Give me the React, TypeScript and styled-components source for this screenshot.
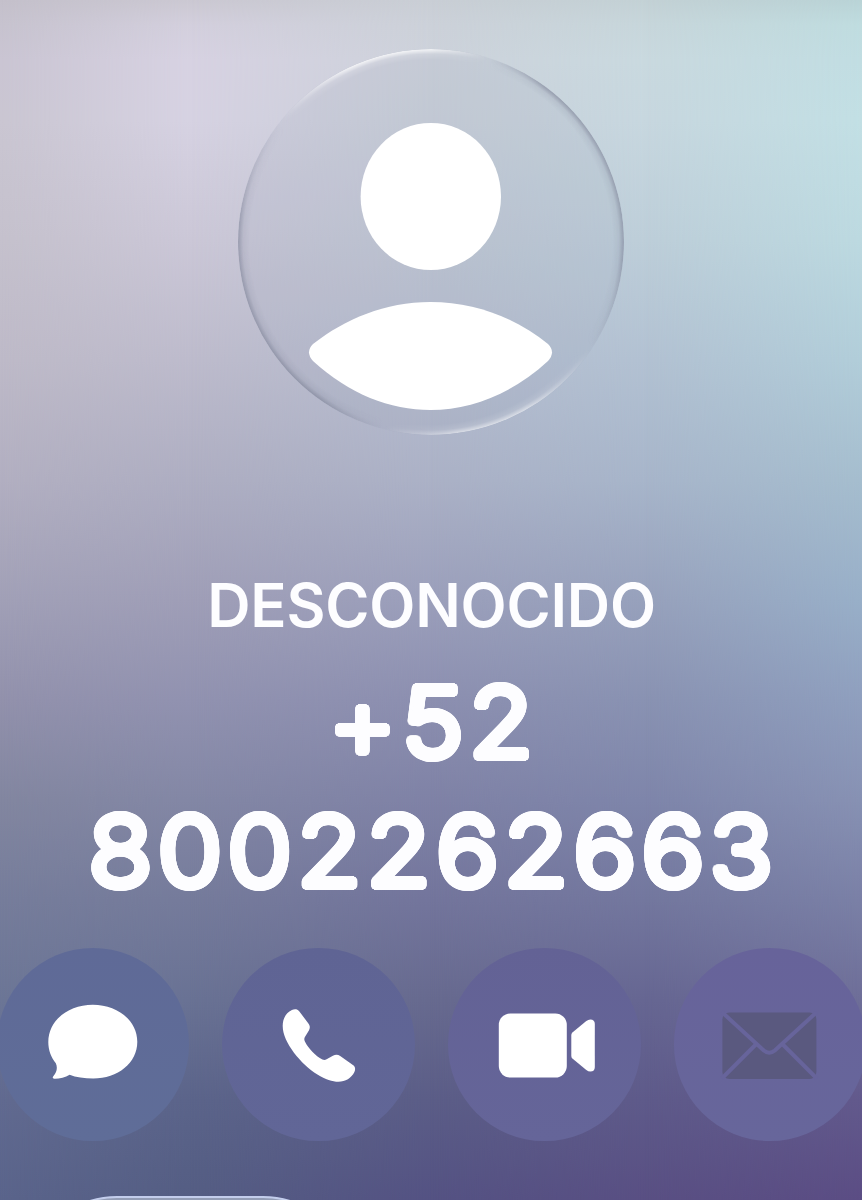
import React from "react";
import styled, { createGlobalStyle } from "styled-components";

const GlobalStyle = createGlobalStyle`
  *, *::before, *::after { box-sizing: border-box; }
  html, body { margin: 0; padding: 0; }
  body { overflow: hidden; }
`;

const rows = [0, 25, 60, 120, 240, 360, 480, 600, 700, 800, 900, 1000, 1100, 1200];

const columns = [
  { from: 0, at: 0, colors: ["#c4c0cb", "#c7c3cf", "#cac5d3", "#cac6d2", "#c5c1cd", "#bebac8", "#b2afc1", "#a1a0b7", "#9291ac", "#8286a0", "#767d9b", "#6c7696", "#616a90", "#5a648b"] },
  { from: 0, at: 190, colors: ["#cbc8d2", "#d3cfdd", "#d7d2e2", "#d6d2e2", "#cbc7d7", "#bdbbcc", "#aeaec2", "#9f9eb7", "#9192b0", "#8387a5", "#757b9b", "#697294", "#5b648a", "#545d83"] },
  { from: 190, at: 430, colors: ["#c9ced5", "#ccd1d9", "#cdd2db", "#c9cfd9", "#c0c7d4", "#b6bdcf", "#abb1c6", "#9b9fbb", "#8c8fb0", "#7f82a6", "#73759c", "#676a8f", "#5b5d87", "#545283"] },
  { from: 430, at: 645, colors: ["#c3d1d5", "#c7d6db", "#c9d9df", "#c7d7df", "#bdced9", "#b2c1d2", "#a7b5ca", "#97a1bc", "#8992b2", "#7e85aa", "#73779e", "#666692", "#5e5a8a", "#594f83"] },
  { from: 645, at: 862, colors: ["#b9d3d6", "#bfdcdf", "#c1dde2", "#c2dfe4", "#bcd9e0", "#b1cdd9", "#a5bdce", "#98afc8", "#8f9fbe", "#8791b3", "#7a80a6", "#6e6e98", "#62598c", "#5b4d84"] },
];

const Screen = styled.main`
  position: relative;
  isolation: isolate;
  width: 862px;
  height: 1200px;
  overflow: hidden;
  display: flex;
  flex-direction: column;
  align-items: center;
  padding-top: 49px;
  color: #fdfdff;
  font-family: Inter, "Liberation Sans", sans-serif;
`;

const Wallpaper = styled.div<{ $from: number; $at: number; $colors: string[] }>`
  position: absolute;
  inset: 0;
  z-index: -1;
  background: linear-gradient(
    to bottom,
    ${({ $colors }) => $colors.map((c, i) => `${c} ${rows[i]}px`).join(", ")}
  );
  ${({ $from, $at }) =>
    $at > 0 ? `mask-image: linear-gradient(to right, transparent ${$from}px, #000 ${$at}px);` : ""}
`;

const Avatar = styled.div`
  position: relative;
  flex: none;
  width: 386px;
  height: 386px;
  border-radius: 50%;
  background: rgba(150, 155, 175, 0.13);

  &::after {
    content: "";
    position: absolute;
    inset: 0;
    border-radius: 50%;
    background: conic-gradient(
      rgba(255, 255, 255, 0.7) 0deg,
      rgba(255, 255, 255, 0) 17deg,
      rgba(125, 130, 150, 0) 18deg,
      rgba(125, 130, 150, 0.55) 36deg,
      rgba(125, 130, 150, 0.5) 95deg,
      rgba(125, 130, 150, 0) 123deg,
      rgba(255, 255, 255, 0) 124deg,
      rgba(255, 255, 255, 0.5) 150deg,
      rgba(255, 255, 255, 0.5) 172deg,
      rgba(255, 255, 255, 0) 194deg,
      rgba(125, 130, 150, 0) 195deg,
      rgba(125, 130, 150, 0.55) 215deg,
      rgba(125, 130, 150, 0.5) 275deg,
      rgba(125, 130, 150, 0) 308deg,
      rgba(255, 255, 255, 0) 309deg,
      rgba(255, 255, 255, 0.7) 335deg,
      rgba(255, 255, 255, 0.7) 360deg
    );
    mask-image: radial-gradient(closest-side, transparent 182px, rgba(0, 0, 0, 0.25) 188px, #000 192px);
  }
`;

const Silhouette = styled.svg`
  display: block;
  width: 386px;
  height: 386px;
  fill: #fff;
`;

const Label = styled.div`
  margin: 134px 0 0 1px;
  height: 72px;
  line-height: 72px;
  font-size: 60px;
  font-weight: 600;
  letter-spacing: -0.2px;
  white-space: nowrap;
`;

/* A ring of offset copies swells thin digits into thick ones with round stroke ends. */
const swell = (radius: number, steps = 24) =>
  Array.from({ length: steps }, (_, i) => {
    const a = (i / steps) * Math.PI * 2;
    return `${(Math.cos(a) * radius).toFixed(2)}px ${(Math.sin(a) * radius).toFixed(2)}px #fdfdff`;
  }).join(", ");

const PhoneNumber = styled.h1`
  margin: 17px 0 0;
  display: flex;
  flex-direction: column;
  align-items: center;
  font-size: 96.5px;
  line-height: 129px;
  font-weight: 300;
  letter-spacing: 5px;
  text-indent: 4px;
  transform: scaleX(1.08);
  text-shadow: ${swell(3.7)};
`;

const NumberLine = styled.span`
  display: block;
  white-space: nowrap;
`;

const Actions = styled.div`
  display: flex;
  flex: none;
  gap: 33.3px;
  margin: 32px 0 0 1px;
`;

const ActionButton = styled.button<{ $tint: string }>`
  flex: none;
  display: grid;
  place-items: center;
  width: 192.5px;
  height: 193px;
  padding: 0;
  border: 0;
  border-radius: 50%;
  background: ${({ $tint }) => $tint};
`;

const Glyph = styled.svg`
  display: block;
  width: 120px;
  height: 120px;
  fill: #fff;
`;

const Card = styled.section`
  flex: none;
  align-self: flex-start;
  width: 334px;
  height: 190px;
  margin: 54.5px 0 0 23px;
  border: 2px solid #c3cdec;
  border-radius: 94px;
  background: #939db6;
`;

export default function App() {
  return (
    <>
      <GlobalStyle />
      <Screen>
        {columns.map((c) => (
          <Wallpaper key={c.at} $from={c.from} $at={c.at} $colors={c.colors} />
        ))}
        <Avatar>
          <Silhouette viewBox="238 49 386 386">
            <ellipse cx="430.8" cy="196.5" rx="70.2" ry="73.6" />
            <path d="M313 344C345 319 385 302 430.5 302S518 319 548 344Q556 352 548 361C512 394 471 410 430.5 410S349 394 313 361Q305 352 313 344Z" />
          </Silhouette>
        </Avatar>
        <Label>DESCONOCIDO</Label>
        <PhoneNumber>
          <NumberLine>+52</NumberLine>
          <NumberLine>8002262663</NumberLine>
        </PhoneNumber>
        <Actions>
          <ActionButton $tint="linear-gradient(#5f6a97, #5f6d98)" aria-label="Mensaje">
            <Glyph viewBox="32.7 984.5 120 120">
              <path d="M92.5 1004.3C117 1004.3 137 1020 137 1041.2S117.500 1078 93 1078C84 1078 75.500 1076.800 69.300 1074.200C65 1077 58.500 1078.500 54 1078.300C52.200 1078.200 52 1076.800 53.200 1075.500C56.500 1072 57.500 1067 55.500 1062.800C51 1057 48 1050 48 1041.500C48 1020 68 1004.300 92.500 1004.300Z" />
            </Glyph>
          </ActionButton>
          <ActionButton $tint="linear-gradient(#5f6494, #616697)" aria-label="Llamar">
            <Glyph viewBox="258.6 984.5 120 120">
              <path d="M291.500 1009.500C294 1008.400 297 1008.300 299 1011L308 1023C309.800 1025.500 309.800 1027.500 308.500 1030L304.500 1036.500C303.700 1038 303.700 1039.200 304.500 1041C308 1048 315 1055.500 322 1059C323.500 1059.700 324.800 1059.600 326.200 1058.800L332.500 1055.300C335 1054 337.500 1054 339.800 1055.500L352.500 1064.500C355 1066.300 355.200 1068.500 354 1071.500C351 1077.500 345 1081.300 338 1081.300C332 1081.300 325 1079 317 1074C301 1064 282.300 1042 282.300 1025.500C282.300 1018 285.500 1012.500 291.500 1009.500Z" />
            </Glyph>
          </ActionButton>
          <ActionButton $tint="linear-gradient(#636295, #656599)" aria-label="Video">
            <Glyph viewBox="484.200 984.5 120 120">
              <rect x="499" y="1013" width="68" height="64" rx="11.5" />
              <path d="M571.500 1034.500Q571.500 1033 572.600 1032L586.500 1020.500Q588.500 1019 590.500 1019Q595 1019 595 1023.500V1066.500Q595 1071 590.500 1071Q588.500 1071 586.500 1069.500L572.600 1058Q571.500 1057 571.500 1055.500Z" />
            </Glyph>
          </ActionButton>
          <ActionButton $tint="linear-gradient(#67639a, #67669b)" aria-label="Correo" disabled>
            <Glyph viewBox="710.200 984.5 120 120">
              <rect x="722.600" y="1012" width="94" height="66.500" rx="7" fill="#5a597f" />
              <g fill="none" stroke="#67649b" strokeWidth="4">
                <path d="M722 1011.500L764 1050Q769.500 1054.500 775 1050L817 1011.500M756 1044L722 1078M783 1044L817 1078" />
              </g>
            </Glyph>
          </ActionButton>
        </Actions>
        <Card />
      </Screen>
    </>
  );
}
